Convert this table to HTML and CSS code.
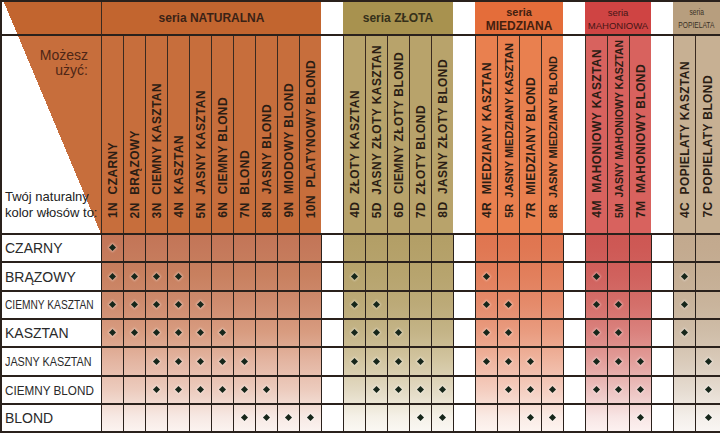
FILE: index.html
```html
<!DOCTYPE html>
<html lang="pl">
<head>
<meta charset="utf-8">
<title>Tabela kolorów</title>
<link rel="stylesheet" href="styles.css">
</head>
<body>
<div class="chart">
  <div class="row hdr">
    <div class="corner-top"></div>
    <div class="sh n s10">seria NATURALNA</div>
    <div class="sh g"></div>
    <div class="sh z s5">seria ZŁOTA</div>
    <div class="sh g"></div>
    <div class="sh m s4 two"><span class="sm">seria</span><span>MIEDZIANA</span></div>
    <div class="sh g"></div>
    <div class="sh h s3 two thin"><span>seria</span><span>MAHONIOWA</span></div>
    <div class="sh g"></div>
    <div class="sh p s2 two tiny"><span>seria</span><span>POPIELATA</span></div>
  </div>

  <div class="row cols">
    <div class="corner">
      <p class="use">Możesz<br>użyć:</p>
      <p class="own">Twój naturalny<br>kolor włosów to:</p>
    </div>
    <div class="c n"><span>1N&nbsp; CZARNY</span></div>
    <div class="c n"><span>2N&nbsp; BRĄZOWY</span></div>
    <div class="c n"><span>3N&nbsp; CIEMNY KASZTAN</span></div>
    <div class="c n"><span>4N&nbsp; KASZTAN</span></div>
    <div class="c n"><span>5N&nbsp; JASNY KASZTAN</span></div>
    <div class="c n"><span>6N&nbsp; CIEMNY BLOND</span></div>
    <div class="c n"><span>7N&nbsp; BLOND</span></div>
    <div class="c n"><span>8N&nbsp; JASNY BLOND</span></div>
    <div class="c n"><span>9N&nbsp; MIODOWY BLOND</span></div>
    <div class="c n"><span>10N&nbsp; PLATYNOWY BLOND</span></div>
    <div class="c g"></div>
    <div class="c z"><span>4D&nbsp; ZŁOTY KASZTAN</span></div>
    <div class="c z"><span>5D&nbsp; JASNY ZŁOTY KASZTAN</span></div>
    <div class="c z"><span>6D&nbsp; CIEMNY ZŁOTY BLOND</span></div>
    <div class="c z"><span>7D&nbsp; ZŁOTY BLOND</span></div>
    <div class="c z"><span>8D&nbsp; JASNY ZŁOTY BLOND</span></div>
    <div class="c g"></div>
    <div class="c m"><span>4R&nbsp; MIEDZIANY KASZTAN</span></div>
    <div class="c m"><span class="cond">5R&nbsp; JASNY MIEDZIANY KASZTAN</span></div>
    <div class="c m"><span>7R&nbsp; MIEDZIANY BLOND</span></div>
    <div class="c m"><span class="cond">8R&nbsp; JASNY MIEDZIANY BLOND</span></div>
    <div class="c g"></div>
    <div class="c h"><span>4M&nbsp; MAHONIOWY KASZTAN</span></div>
    <div class="c h"><span class="cond2">5M&nbsp; JASNY MAHONIOWY KASZTAN</span></div>
    <div class="c h"><span>7M&nbsp; MAHONIOWY BLOND</span></div>
    <div class="c g"></div>
    <div class="c p"><span>4C&nbsp; POPIELATY KASZTAN</span></div>
    <div class="c p"><span>7C&nbsp; POPIELATY BLOND</span></div>
  </div>

  <div class="row data r1">
    <div class="lbl">CZARNY</div>
    <div class="d n"><i></i></div><div class="d n"></div><div class="d n"></div><div class="d n"></div><div class="d n"></div><div class="d n"></div><div class="d n"></div><div class="d n"></div><div class="d n"></div><div class="d n"></div>
    <div class="d g"></div>
    <div class="d z"></div><div class="d z"></div><div class="d z"></div><div class="d z"></div><div class="d z"></div>
    <div class="d g"></div>
    <div class="d m"></div><div class="d m"></div><div class="d m"></div><div class="d m"></div>
    <div class="d g"></div>
    <div class="d h"></div><div class="d h"></div><div class="d h"></div>
    <div class="d g"></div>
    <div class="d p"></div><div class="d p"></div>
  </div>

  <div class="row data r2">
    <div class="lbl">BRĄZOWY</div>
    <div class="d n"><i></i></div><div class="d n"><i></i></div><div class="d n"><i></i></div><div class="d n"><i></i></div><div class="d n"></div><div class="d n"></div><div class="d n"></div><div class="d n"></div><div class="d n"></div><div class="d n"></div>
    <div class="d g"></div>
    <div class="d z"><i></i></div><div class="d z"></div><div class="d z"></div><div class="d z"></div><div class="d z"></div>
    <div class="d g"></div>
    <div class="d m"><i></i></div><div class="d m"></div><div class="d m"></div><div class="d m"></div>
    <div class="d g"></div>
    <div class="d h"><i></i></div><div class="d h"></div><div class="d h"></div>
    <div class="d g"></div>
    <div class="d p"><i></i></div><div class="d p"></div>
  </div>

  <div class="row data r3">
    <div class="lbl"><span class="cond85">CIEMNY KASZTAN</span></div>
    <div class="d n"><i></i></div><div class="d n"><i></i></div><div class="d n"><i></i></div><div class="d n"><i></i></div><div class="d n"><i></i></div><div class="d n"></div><div class="d n"></div><div class="d n"></div><div class="d n"></div><div class="d n"></div>
    <div class="d g"></div>
    <div class="d z"><i></i></div><div class="d z"><i></i></div><div class="d z"></div><div class="d z"></div><div class="d z"></div>
    <div class="d g"></div>
    <div class="d m"><i></i></div><div class="d m"><i></i></div><div class="d m"></div><div class="d m"></div>
    <div class="d g"></div>
    <div class="d h"><i></i></div><div class="d h"><i></i></div><div class="d h"></div>
    <div class="d g"></div>
    <div class="d p"><i></i></div><div class="d p"></div>
  </div>

  <div class="row data r4">
    <div class="lbl">KASZTAN</div>
    <div class="d n"><i></i></div><div class="d n"><i></i></div><div class="d n"><i></i></div><div class="d n"><i></i></div><div class="d n"><i></i></div><div class="d n"><i></i></div><div class="d n"></div><div class="d n"></div><div class="d n"></div><div class="d n"></div>
    <div class="d g"></div>
    <div class="d z"><i></i></div><div class="d z"><i></i></div><div class="d z"><i></i></div><div class="d z"></div><div class="d z"></div>
    <div class="d g"></div>
    <div class="d m"><i></i></div><div class="d m"><i></i></div><div class="d m"></div><div class="d m"></div>
    <div class="d g"></div>
    <div class="d h"><i></i></div><div class="d h"><i></i></div><div class="d h"></div>
    <div class="d g"></div>
    <div class="d p"><i></i></div><div class="d p"></div>
  </div>

  <div class="row data r5">
    <div class="lbl"><span class="cond90">JASNY KASZTAN</span></div>
    <div class="d n"></div><div class="d n"></div><div class="d n"><i></i></div><div class="d n"><i></i></div><div class="d n"><i></i></div><div class="d n"><i></i></div><div class="d n"><i></i></div><div class="d n"></div><div class="d n"></div><div class="d n"></div>
    <div class="d g"></div>
    <div class="d z"><i></i></div><div class="d z"><i></i></div><div class="d z"><i></i></div><div class="d z"><i></i></div><div class="d z"></div>
    <div class="d g"></div>
    <div class="d m"><i></i></div><div class="d m"><i></i></div><div class="d m"><i></i></div><div class="d m"></div>
    <div class="d g"></div>
    <div class="d h"><i></i></div><div class="d h"><i></i></div><div class="d h"><i></i></div>
    <div class="d g"></div>
    <div class="d p"></div><div class="d p"><i></i></div>
  </div>

  <div class="row data r6">
    <div class="lbl"><span class="cond91">CIEMNY BLOND</span></div>
    <div class="d n"></div><div class="d n"></div><div class="d n"><i></i></div><div class="d n"><i></i></div><div class="d n"><i></i></div><div class="d n"><i></i></div><div class="d n"><i></i></div><div class="d n"><i></i></div><div class="d n"></div><div class="d n"></div>
    <div class="d g"></div>
    <div class="d z"></div><div class="d z"><i></i></div><div class="d z"><i></i></div><div class="d z"><i></i></div><div class="d z"><i></i></div>
    <div class="d g"></div>
    <div class="d m"></div><div class="d m"><i></i></div><div class="d m"><i></i></div><div class="d m"><i></i></div>
    <div class="d g"></div>
    <div class="d h"><i></i></div><div class="d h"><i></i></div><div class="d h"><i></i></div>
    <div class="d g"></div>
    <div class="d p"></div><div class="d p"><i></i></div>
  </div>

  <div class="row data r7">
    <div class="lbl">BLOND</div>
    <div class="d n"></div><div class="d n"></div><div class="d n"></div><div class="d n"></div><div class="d n"></div><div class="d n"></div><div class="d n"><i></i></div><div class="d n"><i></i></div><div class="d n"><i></i></div><div class="d n"><i></i></div>
    <div class="d g"></div>
    <div class="d z"></div><div class="d z"></div><div class="d z"></div><div class="d z"><i></i></div><div class="d z"><i></i></div>
    <div class="d g"></div>
    <div class="d m"></div><div class="d m"></div><div class="d m"><i></i></div><div class="d m"><i></i></div>
    <div class="d g"></div>
    <div class="d h"></div><div class="d h"></div><div class="d h"><i></i></div>
    <div class="d g"></div>
    <div class="d p"></div><div class="d p"><i></i></div>
  </div>
</div>
</body>
</html>
```

FILE: styles.css
```css
:root {
  --line: #2a211c;
  --vline: #3a2a20;
  --nat-h: #c2652f;
  --nat-c: #c76e3c;
  --zl-h: #a8924f;
  --zl-c: #b8a36b;
  --mi-h: #e46d3a;
  --mi-c: #e9804f;
  --ma-h: #cf4443;
  --ma-c: #d8625e;
  --po-h: #b79e7e;
  --po-c: #c7b093;
}

* { box-sizing: border-box; }

body {
  margin: 0;
  background: #fff;
}

.chart {
  width: 720px;
  border-left: 2px solid var(--line);
  border-top: 2px solid var(--line);
  border-bottom: 2px solid var(--line);
  font-family: "Liberation Sans", Arial, sans-serif;
  color: #2b1d14;
}

.row {
  display: grid;
  grid-template-columns: 99px repeat(10, 22px) 22px repeat(5, 22px) 22px repeat(4, 22px) 22px repeat(3, 22px) 22px 22px 1fr;
}

/* ---------- series header row ---------- */
.hdr { height: 34px; }
.hdr > div { border-bottom: 2px solid var(--line); }

.corner-top {
  background:
    linear-gradient(to top right, #fff 50%, var(--nat-h) 50%) 1px -2px / 98px 234px no-repeat border-box,
    #fff;
}

.sh {
  display: flex;
  flex-direction: column;
  align-items: center;
  justify-content: center;
  font-weight: bold;
  font-size: 12px;
  line-height: 14px;
  white-space: nowrap;
}
.sh.g { background: #fff; }
.sh.n { background: var(--nat-h); border-left: 1px solid var(--vline); color: #3a2216; }
.sh.z { background: var(--zl-h); color: #35301a; }
.sh.m { background: var(--mi-h); color: #43200f; }
.sh.h { background: var(--ma-h); color: #451616; }
.sh.p { background: var(--po-h); color: #3a3025; }
.s10 { grid-column: span 10; }
.s5 { grid-column: span 5; }
.s4 { grid-column: span 4; }
.s3 { grid-column: span 3; }
.s2 { grid-column: span 2; }
.sh.two { padding-top: 1px; }
.sh .sm { font-size: 11px; }
.sh.thin { font-weight: normal; font-size: 9.5px; line-height: 13px; }
.sh.tiny { font-weight: normal; font-size: 9px; line-height: 13px; }
.sh.tiny span { display: block; transform: scaleX(.74); }

/* ---------- column label row ---------- */
.cols { height: 197px; }

.corner {
  display: flex;
  flex-direction: column;
  justify-content: space-between;
  background:
    linear-gradient(to top right, #fff 50%, var(--nat-c) 50%) 1px -36px / 98px 234px no-repeat border-box,
    #fff;
}
.corner p { margin: 0; }
.use {
  padding: 12px 13px 0 0;
  text-align: right;
  font-size: 14px;
  line-height: 15px;
  color: #4e2616;
}
.own {
  padding: 0 0 12px 3px;
  font-size: 13px;
  line-height: 16px;
  color: #222;
  white-space: nowrap;
}

.c {
  display: flex;
  flex-direction: column;
  justify-content: flex-end;
  align-items: center;
  padding-bottom: 15px;
  border-left: 1px solid var(--vline);
}
.c.g { background: #fff; border-left: 0; }
.c.n { background: var(--nat-c); }
.c.z { background: var(--zl-c); }
.c.m { background: var(--mi-c); }
.c.h { background: var(--ma-c); }
.c.p { background: var(--po-c); }

.c span {
  writing-mode: vertical-rl;
  transform: rotate(180deg);
  white-space: nowrap;
  font-weight: bold;
  font-size: 12px;
  line-height: 14px;
  letter-spacing: .4px;
}
.c span.cond { font-size: 11px; letter-spacing: 0; }
.c span.cond2 { font-size: 10.5px; letter-spacing: 0; }

/* ---------- data rows ---------- */
.r1, .r3, .r4, .r6, .r7 { height: 28px; }
.r2, .r5 { height: 29px; }

.lbl {
  display: flex;
  align-items: center;
  padding-left: 3px;
  border-top: 2px solid var(--line);
  background: #fff;
  font-size: 14px;
  color: #2a2a2a;
  white-space: nowrap;
}
.lbl span { display: inline-block; transform-origin: left center; }
.cond85 { font-size: 12px; transform: scaleX(.85); }
.cond90 { font-size: 12px; transform: scaleX(.9); }
.cond91 { font-size: 13px; transform: scaleX(.9); }

.d {
  display: flex;
  align-items: center;
  justify-content: center;
  border-top: 2px solid var(--line);
  border-left: 1px solid var(--line);
  background-size: 100% 198px;
  background-repeat: no-repeat;
  background-origin: border-box;
}
.d.g { background: #fff; }
.d.n { background-image: linear-gradient(#c27556, #c4785a 7%, #c8805f 21%, #cf8c6f 36%, #d89c80 50%, #e3b4a0 64%, #eccbbd 79%, #f7e9e4 93%, #fbf3f0); }
.d.z { background-image: linear-gradient(#b29e66, #b4a068 7%, #b7a46e 21%, #bcaa78 36%, #c4b487 50%, #d2c5a0 64%, #e2d9c2 79%, #f5f1e8 93%, #faf8f3); }
.d.m { background-image: linear-gradient(#df7550, #e07752 7%, #e27f5c 21%, #e58b6b 36%, #e99c80 50%, #efb49e 64%, #f4cdbf 79%, #faebe5 93%, #fdf4f0); }
.d.h { background-image: linear-gradient(#cd5753, #ce5955 7%, #d0615d 21%, #d46f6a 36%, #da827e 50%, #e29d99 64%, #ecc1bf 79%, #f8e6e5 93%, #fcf1f0); }
.d.p { background-image: linear-gradient(#c2a98e, #c3aa8f 7%, #c5ae94 21%, #c9b49c 36%, #cfbda8 50%, #d9cab9 64%, #e5dbd0 79%, #f4efea 93%, #f9f6f3); }

.r1 > .d { background-position: 0 0; }
.r2 > .d { background-position: 0 -28px; }
.r3 > .d { background-position: 0 -57px; }
.r4 > .d { background-position: 0 -85px; }
.r5 > .d { background-position: 0 -113px; }
.r6 > .d { background-position: 0 -142px; }
.r7 > .d { background-position: 0 -170px; }

.d i {
  display: block;
  width: 5px;
  height: 5px;
  margin-top: -1px;
  background: #16261a;
  transform: rotate(45deg);
  box-shadow: 0 0 2px 1px rgba(255, 255, 255, .35);
}
```
